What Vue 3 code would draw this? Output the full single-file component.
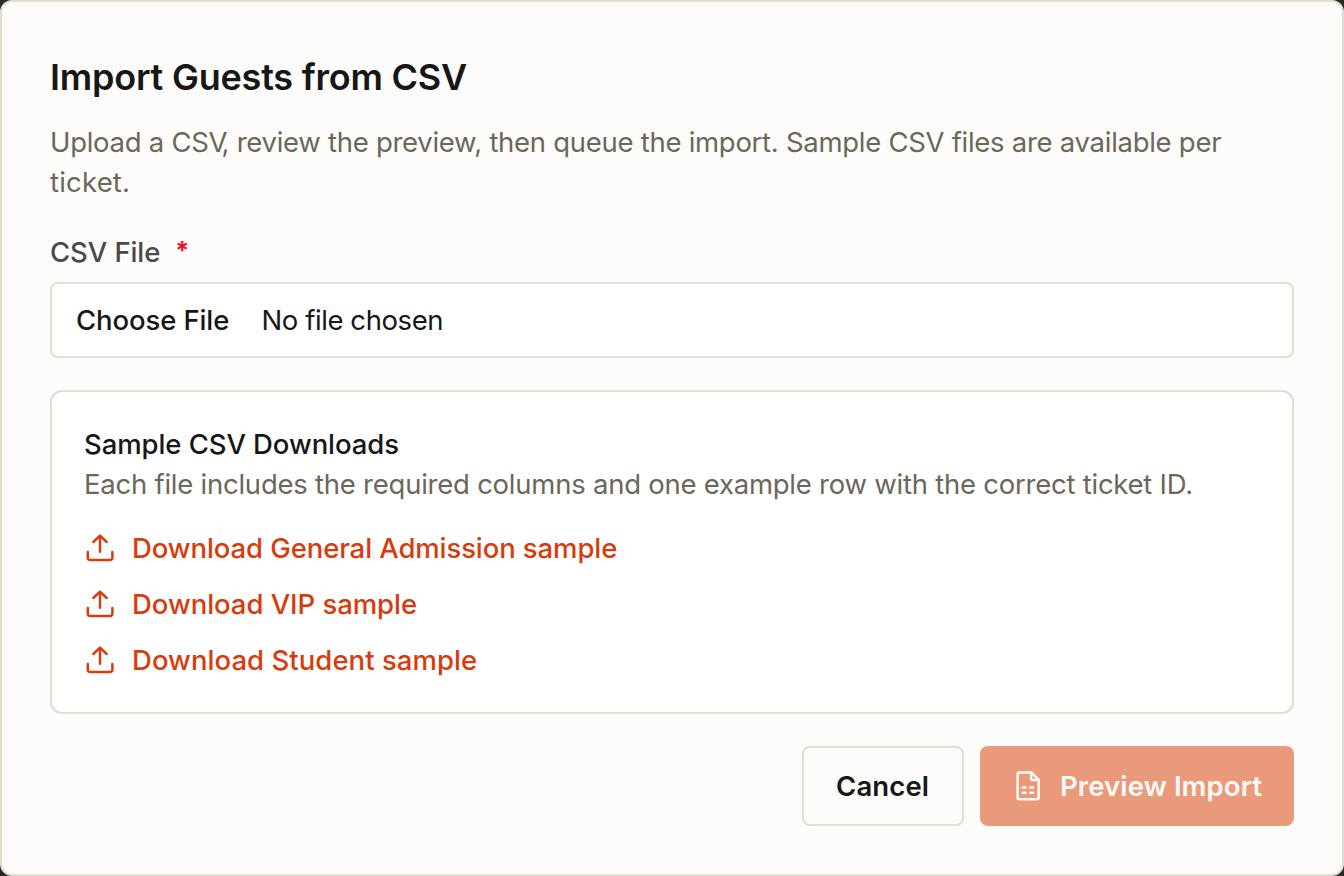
<script setup>
const samples = [
  { name: 'General Admission', cls: 'general' },
  { name: 'VIP', cls: 'vip' },
  { name: 'Student', cls: 'student' },
]
</script>

<template>
  <section class="dialog" role="dialog" aria-labelledby="title">
    <h1 id="title">Import Guests from CSV</h1>
    <p class="intro">
      Upload a CS<span class="tight">V</span>, review the preview, then queue the import. Sample CSV files are available per
      <br /><span class="last">ticket.</span>
    </p>

    <div class="label"><span>CSV File</span><span class="star">*</span></div>
    <div class="file">
      <span class="choose">Choose File</span>
      <span class="none">No file chosen</span>
    </div>

    <div class="card">
      <h2>Sample CSV Downloads</h2>
      <p class="hint">Each file includes the required columns and one example row with the correct ticket ID.</p>
      <ul>
        <li v-for="s in samples" :key="s.name">
          <svg width="32" height="32" viewBox="0 0 32 32" fill="none" stroke="currentColor" stroke-width="2.5" stroke-linecap="round" stroke-linejoin="round">
            <path d="M16 19.7V4M9.3 10L16 3.7L22.7 10" />
            <path d="M3.8 19.9V25.4Q3.8 27.9 6.3 27.9H25.9Q28.4 27.9 28.4 25.4V19.9" />
          </svg>
          <a :class="s.cls">Download {{ s.name }} sample</a>
        </li>
      </ul>
    </div>

    <div class="actions">
      <button class="cancel" type="button"><span>Cancel</span></button>
      <button class="preview" type="button">
        <svg width="32" height="32" viewBox="0 0 32 32" fill="none" stroke="currentColor" stroke-width="2.5" stroke-linecap="round" stroke-linejoin="round">
          <path d="M19.2 2.4H7.6Q5.6 2.4 5.6 4.4V27.4Q5.6 29.4 7.6 29.4H24.8Q26.8 29.4 26.8 27.4V9.8Z" />
          <path d="M19.2 2.8V8.4Q19.2 9.9 20.7 9.9H26.4" />
          <path d="M10.6 17.5H13.4M18.3 17.5H21.1M10.6 22.7H13.4M18.3 22.7H21.1" />
        </svg>
        <span>Preview Import</span>
      </button>
    </div>
  </section>
</template>

<style>
html,
body {
  background: #292826;
}
</style>

<style scoped>
.dialog {
  box-sizing: border-box;
  width: 1344px;
  height: 876px;
  padding: 53px 48px 48px;
  border: 2px solid #e4dccd;
  border-radius: 12px;
  background: #fdfcfa;
  color: #171717;
  font: 400 27.5px/40px Inter, "Liberation Sans", sans-serif;
  white-space: nowrap;
}
h1,
h2,
p,
ul {
  margin: 0;
  padding: 0;
}
h1 {
  height: 44px;
  font-size: 36px;
  font-weight: 600;
  line-height: 44px;
  letter-spacing: -0.22px;
}
.intro {
  margin-top: 23px;
  color: #6b6759;
  letter-spacing: -0.28px;
}
.tight {
  letter-spacing: -6px;
}
.last {
  letter-spacing: 0.2px;
}
.label {
  display: flex;
  margin-top: 30px;
  color: #4a4947;
  font-weight: 500;
  letter-spacing: -0.09px;
}
.star {
  margin-left: 15px;
  color: #f0101c;
  font-size: 25px;
  line-height: 38px;
  font-weight: 700;
}
.file {
  display: flex;
  box-sizing: border-box;
  align-items: center;
  height: 76px;
  margin-top: 10px;
  padding: 0 24px;
  border: 2px solid #e4dccd;
  border-radius: 8px;
  background: #fff;
}
.choose {
  width: 185.5px;
  font-weight: 500;
  letter-spacing: -0.11px;
}
.none {
  letter-spacing: -0.42px;
}
.card {
  box-sizing: border-box;
  height: 324px;
  margin-top: 32px;
  padding: 32px;
  border: 2px solid #e4dccd;
  border-radius: 12px;
  background: #fff;
}
h2 {
  font-size: 27.5px;
  font-weight: 500;
  letter-spacing: -0.08px;
}
.hint {
  color: #6b6759;
  letter-spacing: -0.24px;
}
ul {
  display: flex;
  flex-direction: column;
  gap: 16px;
  margin-top: 24px;
  list-style: none;
}
li {
  display: flex;
  align-items: center;
  gap: 16px;
  height: 40px;
  color: #d83c0c;
  font-weight: 500;
}
.general {
  letter-spacing: -0.1px;
}
.vip {
  letter-spacing: -0.05px;
}
.student {
  letter-spacing: 0.05px;
}
.actions {
  display: flex;
  justify-content: flex-end;
  gap: 16px;
  margin-top: 32px;
}
button {
  display: flex;
  box-sizing: border-box;
  align-items: center;
  height: 80px;
  padding: 0 32px;
  border: 0;
  border-radius: 8px;
  font: inherit;
  font-weight: 600;
}
.cancel {
  width: 162px;
  border: 2px solid #e4dccd;
  background: #fdfcfa;
  color: #171717;
  letter-spacing: 0.12px;
}
.preview {
  width: 314px;
  gap: 16px;
  background: #e99a7b;
  color: #fff9f6;
  letter-spacing: 0.12px;
}
</style>
